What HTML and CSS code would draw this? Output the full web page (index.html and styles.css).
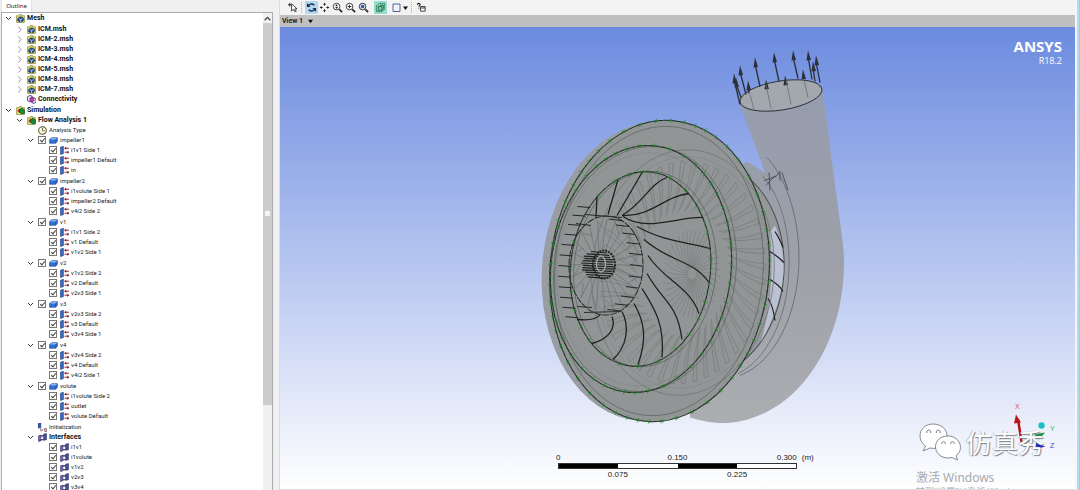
FILE: index.html
```html
<!DOCTYPE html>
<html lang="en">
<head>
<meta charset="utf-8">
<title>Flow Analysis 1</title>
<link rel="stylesheet" href="styles.css">
</head>
<body>
<svg class="defs" aria-hidden="true">
  <symbol id="i-mesh" viewBox="0 0 16 16"><path d="M1 3h4l1-2h4v2h5v12H1z" fill="#e4e06a" stroke="#6d6c22"/><path d="M3 8l4-3 5 1 2 3-2 4-5 1-4-2z" fill="#274f9c" stroke="#101c3c"/><path d="M5 8l3 2 4-2M8 10v4" stroke="#bcd4f4" stroke-width="1.5" fill="none"/></symbol>
  <symbol id="i-conn" viewBox="0 0 16 16"><path d="M1 3l4-2 4 1v7l-4 3-4-2z" fill="#fff" stroke="#26215e" stroke-width="1.5"/><path d="M9 6l4-1 3 2v6l-4 2-4-2z" fill="#fff" stroke="#26215e" stroke-width="1.5"/><path d="M5 5l6-1 2 6-4 3-4-2z" fill="#b43bb5" stroke="#6d1673"/></symbol>
  <symbol id="i-sim" viewBox="0 0 16 16"><path d="M1 3h4l1-2h4v2h5v12H1z" fill="#e4e06a" stroke="#6d6c22"/><path d="M2 9l5-5v9z" fill="#d22e22"/><path d="M6 6l5-2 4 3v6l-5 1-4-3z" fill="#128a3b" stroke="#0b3a1c"/></symbol>
  <symbol id="i-clock" viewBox="0 0 16 16"><circle cx="8" cy="8" r="6.8" fill="#fdfbe2" stroke="#57552e" stroke-width="1.8"/><path d="M8 3.500v5h4" fill="none" stroke="#57552e" stroke-width="1.500"/></symbol>
  <symbol id="i-domain" viewBox="0 0 16 16"><path d="M1 6l4-3h10v6l-3 4H1z" fill="#2f6fd0" stroke="#1a3c8c"/><path d="M2 6l3-2.500h9L12 6z" fill="#86b5f3"/><path d="M12 6v6" stroke="#1a3c8c"/></symbol>
  <symbol id="i-bound" viewBox="0 0 16 16"><path d="M1 2l5-1.500v13L1 15z" fill="#3270d0" stroke="#15295c"/><path d="M8 4h8M8 11h8" stroke="#8f1f2b" stroke-width="1.700"/><path d="M11 1v6l-3-3zM13 8v6l3-3z" fill="#8f1f2b"/></symbol>
  <symbol id="i-init" viewBox="0 0 16 16"><path d="M0 1l5-1v8l-5 1z" fill="#2b61b4" stroke="#15295c"/><path d="M5 9v5h2M7 12h3M12 10h3v5h-3z" fill="none" stroke="#6a3442" stroke-width="1.300"/></symbol>
  <symbol id="i-face" viewBox="0 0 16 16"><path d="M1 5l4-1v10l-4 1z" fill="#7568b8" stroke="#251f55"/><path d="M10 2l5-1v11l-5 1z" fill="#4052a0" stroke="#251f55"/><path d="M5 5h5M5 12h5" stroke="#321c46" stroke-width="2"/></symbol>
</svg>
<div class="app">
  <aside class="outline">
    <div class="tabs"><button class="tab" type="button">Outline</button></div>
    <div class="panel">
      <ul class="tree" id="tree"></ul>
      <div class="scroll"><button class="scroll-up" type="button" aria-label="Scroll up"><svg viewBox="0 0 8 8"><path d="M1.500 5.500L4 3l2.500 2.500" fill="none" stroke="#444" stroke-width="1.200"/></svg></button><div class="thumb"><i></i></div></div>
    </div>
  </aside>
  <main class="viewer">
    <div class="toolbar">
      <button type="button" class="pick" aria-label="Select"><svg viewBox="0 0 12 12"><path d="M1 3h4M3 1v4" stroke="#222"/><path d="M5 2v8l2-2 2 3 1-1-1.500-2.500H11z" fill="#fff" stroke="#222" stroke-width=".9"/></svg></button>
      <span class="grip"></span>
      <button type="button" class="on" aria-label="Rotate"><svg viewBox="0 0 12 12"><path d="M2 5a4 3.500 0 0 1 7-1.500M10 7a4 3.500 0 0 1-7 1.500" fill="none" stroke="#17304f" stroke-width="1.600"/><path d="M1 1v4.500h4zM11 11V6.500H7z" fill="#17304f"/></svg></button>
      <button type="button" aria-label="Pan"><svg viewBox="0 0 12 12"><path d="M6 1v3M6 8v3M1 6h3M8 6h3" stroke="#222"/><path d="M6 1L4.300 3h3.400zM6 11L4.300 9h3.400zM1 6l2-1.700v3.400zM11 6L9 4.300v3.400z" fill="#222"/></svg></button>
      <button type="button" aria-label="Zoom"><svg viewBox="0 0 12 12"><circle cx="5" cy="5" r="3.600" fill="#fff" stroke="#333"/><path d="M8 8l3 3" stroke="#222" stroke-width="1.800"/><path d="M5 2.500L3.500 4.500h3zM5 7.500L3.500 5.500h3z" fill="#222"/></svg></button>
      <button type="button" aria-label="Zoom box"><svg viewBox="0 0 12 12"><circle cx="5" cy="5" r="3.600" fill="#fff" stroke="#333"/><path d="M8 8l3 3" stroke="#222" stroke-width="1.800"/><path d="M3 5h4M5 3v4" stroke="#222"/></svg></button>
      <button type="button" aria-label="Fit view"><svg viewBox="0 0 12 12"><circle cx="5" cy="5" r="3.600" fill="#c6d4ee" stroke="#333"/><path d="M8 8l3 3" stroke="#222" stroke-width="1.800"/><path d="M3.500 3.500h3v3h-3z" fill="#344c86"/></svg></button>
      <button type="button" class="on green" aria-label="Highlighting"><svg viewBox="0 0 12 12"><path d="M1.500 4l3-2.500h6V8l-3 2.500h-6z" fill="#8ccfb2" stroke="#14704c" stroke-dasharray="1.500 .7"/><path d="M3.500 5h4v4h-4zM5 5l1-1.500h3v4L7.500 9" fill="none" stroke="#14704c"/></svg></button>
      <button type="button" class="wide" aria-label="Viewports"><svg viewBox="0 0 20 12"><path d="M3 2h7v7.500H3z" fill="#eef3fc" stroke="#53658e"/><path d="M13 4.500h5L15.500 8z" fill="#111"/></svg></button>
      <span class="grip"></span>
      <button type="button" aria-label="Help"><svg viewBox="0 0 12 12"><path d="M1.500 3c0-2 3-2 3 0L3 5M3 6.200v1" fill="none" stroke="#222" stroke-width="1.200"/><path d="M5 5h5v5H5zM5 6.500h5" fill="#fff" stroke="#333"/></svg></button>
    </div>
    <button type="button" class="viewbar">View 1 <svg viewBox="0 0 8 6"><path d="M1 1h6L4 5z" fill="#111"/></svg></button>
    <div class="canvas">
      <svg class="scene" id="scene" viewBox="280 27 795 463" preserveAspectRatio="xMidYMid slice" role="img" aria-label="Impeller and volute model">
        <defs><linearGradient id="vol" x1="0" y1="0" x2="0" y2="1"><stop offset="0" stop-color="#959cae"/><stop offset=".5" stop-color="#9da0a8"/><stop offset="1" stop-color="#acadb1"/></linearGradient></defs>
        <path fill="url(#vol)" d="M740 105L765 173L747 162L690 200V418C704 422 715 424 727 423.500C752 422 776 411 797 390C829 357 844 310 844 263C844 250 842 237 841 230L822 87Z"/>
        <ellipse cx="652" cy="272" rx="110" ry="150" transform="rotate(5 652 272)" fill="#999da3"/>
        <ellipse cx="781" cy="96" rx="41.500" ry="14.500" transform="rotate(-9 781 96)" fill="#a3a7ae" stroke="#282b30" stroke-width=".9"/>
        <g id="outletArrows"></g>
        <path d="M767 158C784 176 799 214 799 258C799 312 776 362 740 376" fill="none" stroke="#555c68" stroke-width=".7"/>
        <path d="M762 176C780 195 790 230 789 268C788 322 764 362 738 374" fill="none" stroke="#666a70" stroke-width=".8"/>
        <ellipse cx="703" cy="270" rx="81" ry="108" transform="rotate(4 703 270)" fill="#95989a" stroke="#4b4e50" stroke-width="1"/>
        <path d="M775 226C786 252 787 278 775 312C771 323 766 333 761 342C771 308 774 270 770 232Z" fill="#b9c1d3"/>
        <path d="M770 252Q778 257 784 263M770 280Q780 286 783 292M768 299Q773 306 775 321M775 232Q781 242 783 248" fill="none" stroke="#1c1d1d" stroke-width="1.200"/>
        <path d="M769 173l1 18M764 181l12-4 4-5v9M782 173l6 18M766 186l9-10" fill="none" stroke="#3c4149" stroke-width=".8"/>
        <ellipse cx="659.500" cy="271.500" rx="109.500" ry="151" transform="rotate(5.500 659.500 271.500)" fill="#929595"/>
        <g id="ghost"></g>
        <g id="rings"></g>
        <g id="hub"></g>
        <g fill="none" stroke="#202222" stroke-width="1.300" id="blades">
          <path d="M597 197L596 218M618 180L608 215M642 173L617 216M667 178C650 184 643 204 622 216"/>
          <path d="M689 194C663 197 653 217 622 216"/><path d="M703 218C677 217 647 233 623 217"/>
          <path d="M710 249C690 243 663 242 637 227"/><path d="M709 283C693 260 670 263 644 240"/>
          <path d="M699 314C690 287 663 280 648 256"/><path d="M682 340C677 303 663 303 647 274"/>
          <path d="M662 358C665 323 653 307 642 289"/><path d="M638 365C647 340 645 323 634 304"/>
          <path d="M613 360C627 347 630 327 622 312"/><path d="M592 344C607 340 617 330 612 317"/><path d="M577 320C587 321 597 320 600 315"/>
        </g>
        <path d="M1022 445L1018 420" stroke="#b31217" stroke-width="2.500"/><path d="M1016 415l-2 9 7-1z" fill="#c41318"/>
        <path d="M1023 446h15" stroke="#171b9c" stroke-width="2"/><path d="M1036 443l9 4-9 3z" fill="#1b20c0"/>
        <path d="M1023 444L1038 436" stroke="#148536" stroke-width="2"/><path d="M1034 435l11-2-6 7z" fill="#149137"/>
        <circle cx="1041.500" cy="426" r="3.200" fill="#1cc0c4"/>
        <g class="axis"><text x="1015" y="409" fill="#df4b54">X</text><text x="1050" y="431" fill="#35b35c">Y</text><text x="1050" y="448" fill="#4145e0">Z</text></g>
      </svg>
      <div class="brand"><strong>ANSYS</strong><span>R18.2</span></div>
      <div class="scale">
        <div class="ticks"><span>0</span><span>0.150</span><span class="last">0.300</span></div>
        <div class="bar"><i></i><i></i><i></i><i></i></div>
        <div class="ticks under"><span>0.075</span><span>0.225</span></div>
        <span class="unit">(m)</span>
      </div>
      <div class="wechat">
        <svg viewBox="0 0 42 38"><g stroke="#858b94" stroke-width="1" fill="#fff"><path d="M14 1C6 1 1 6.500 1 13c0 4 2 7.500 5.500 10L4 28l7-3c9 2 17-3 17-12C28 6 22 1 14 1z"/><path d="M29 13c-8 0-12.500 5-12.500 11S22 35 29 35l4-.5 5.500 2.500-1.500-4.500c3-2 4.500-5 4.500-8C41.500 18 36 13 29 13z"/></g><g fill="#fff" stroke="#777d86"><path d="M8 10a2 2 0 1 1 3.500 0M17.500 10a2 2 0 1 1 3.500 0M23 21a1.700 1.700 0 1 1 3 0M32 21a1.700 1.700 0 1 1 3 0"/></g></svg>
        <span lang="zh">仿真秀</span>
      </div>
      <div class="activate" lang="zh"><p>激活 Windows</p><small>转到“设置”以激活 Windows。</small></div>
    </div>
  </main>
  <div class="edge"></div>
</div>
<script src="app.js"></script>
</body>
</html>
```
FILE: styles.css
```css
* { box-sizing: border-box; }
body { margin: 0; background: #f0f0f0; color: #222; font-family: Roboto, "Noto Sans", sans-serif; font-size: 7px; overflow: hidden; }
button { margin: 0; padding: 0; border: 0; background: none; font: inherit; color: inherit; }
svg { display: block; }
ul { margin: 0; padding: 0; list-style: none; }
.defs { position: absolute; width: 0; height: 0; }
.app { display: flex; height: 100vh; }

.outline { flex: 0 0 280px; display: flex; flex-direction: column; padding: 0 6px 0 1px; border-right: 1px solid #dcdcdc; }
.tabs { display: flex; height: 12px; }
.tab { width: 31px; background: #fff; border: 1px solid #e2e2e2; border-width: 0 1px; font-family: "Noto Sans", sans-serif; font-size: 6px; line-height: 12px; }
.panel { flex: 1; min-height: 0; display: flex; background: #fff; border: 1px solid #a9abb0; border-bottom: 0; overflow: hidden; }
.tree { flex: 1; padding-left: 3px; }
.tree ul { padding-left: 11px; }
.tree .spaced { padding-top: 1px; }
.tree .gap { padding-bottom: 1px; }
.row { display: flex; align-items: center; gap: 3px; height: 10px; white-space: nowrap; font-size: 6px; line-height: 10px; }
.row.bold { font-size: 7px; font-weight: bold; color: #111; }
.row .twist { flex: none; width: 8px; height: 8px; }
.row svg { width: 9px; height: 9px; }
.row .icon { flex: none; margin-right: -1px; }
.row label { display: flex; align-items: center; gap: 3px; font-weight: normal; }
.row input { position: relative; flex: none; appearance: none; width: 8px; height: 8px; margin: 0; border: 1px solid #777; background: #fff; }
.row input:checked::after { content: ""; position: absolute; left: 2px; top: 0; width: 2px; height: 4px; border: solid #444; border-width: 0 1px 1px 0; transform: rotate(40deg); }
.scroll { flex: 0 0 9px; display: flex; flex-direction: column; background: #f0f0f0; }
.scroll-up { height: 10px; }
.scroll-up svg { width: 9px; height: 9px; }
.thumb { flex: 0 1 80%; display: flex; align-items: center; justify-content: center; background: #cdcdcd; }
.thumb i { width: 5px; height: 5px; background: #f4f4f4; }

.viewer { flex: 1; min-width: 0; display: flex; flex-direction: column; }
.toolbar { flex: none; display: flex; align-items: center; height: 15px; padding-left: 6px; background: #f3f3f3; }
.toolbar button { width: 13px; height: 13px; padding: 1px; }
.toolbar svg { width: 11px; height: 11px; }
.toolbar .pick { margin-right: 2px; }
.toolbar .on { background: #b4d8f2; }
.toolbar .green { margin: 0 2px 0 4px; background: #9adbd0; }
.toolbar .wide { width: 22px; }
.toolbar .wide svg { width: 20px; height: 12px; }
.grip { width: 4px; height: 11px; border-left: 1px dotted #aaa; }
.viewbar { flex: none; display: flex; align-items: center; gap: 4px; height: 12px; padding-left: 2px; background: #c0c0c0; font-size: 7px; font-weight: bold; line-height: 12px; }
.viewbar svg { width: 7px; height: 5px; }
.canvas { position: relative; flex: 1; min-height: 0; overflow: hidden; background: linear-gradient(#6c8bdf, #b4c4f0 50%, #fff); border-bottom: 1px solid #ddd; }
.scene { width: 100%; height: 100%; }
.axis { font: 7px "Liberation Sans", sans-serif; }
.brand { position: absolute; top: 10px; right: 13px; display: flex; flex-direction: column; align-items: flex-end; color: #fff; font-family: "Open Sans", sans-serif; }
.brand strong { font-size: 15px; line-height: 18px; }
.brand span { font-size: 9px; line-height: 11px; }
.scale { position: absolute; left: 35%; bottom: 10px; width: 30%; color: #222; font: 8px/9px "Liberation Sans", sans-serif; }
.ticks { display: flex; justify-content: space-between; height: 10px; }
.ticks span { display: flex; justify-content: center; width: 0; }
.ticks .last { justify-content: flex-end; }
.under { padding: 1px 25% 0; }
.bar { display: flex; height: 6px; border: 1px solid #333; background: #fff; }
.bar i { flex: 1; }
.bar i:nth-child(odd) { background: #000; }
.unit { position: absolute; left: calc(100% + 5px); top: 0; }
.wechat { position: absolute; right: 31px; bottom: 28px; display: flex; align-items: center; gap: 5px; color: #fff; }
.wechat svg { width: 42px; height: 38px; }
.wechat span { font: 26px/38px "Noto Sans CJK SC", sans-serif; text-shadow: 1px 1px 1px #7b818b, -1px 0 1px #b5bbc5; }
.activate { position: absolute; right: 52px; bottom: -8px; width: 107px; color: #a9abb0; font-family: "Noto Sans", "Noto Sans CJK SC", sans-serif; white-space: nowrap; }
.activate p { margin: 0; font-size: 12px; line-height: 16px; }
.activate small { display: block; font-size: 9px; line-height: 11px; }
.edge { flex: 0 0 5px; border: solid #a9c9dc; border-width: 0 1px 0 0; background: linear-gradient(90deg, #f1f7fc 50%, #b5dcec 50%); }
```
FILE: app.js
```js
const domain = (name, ...items) => ({ name, icon: 'domain', check: true, open: true, cls: 'gap',
  kids: items.map(n => ({ name: n, icon: 'bound', check: true })) });
const data = [
  { name: 'Mesh', icon: 'mesh', bold: true, open: true, cls: 'spaced gap', kids: [
    ...['ICM.msh', 'ICM-2.msh', 'ICM-3.msh', 'ICM-4.msh', 'ICM-5.msh', 'ICM-8.msh', 'ICM-7.msh']
      .map(name => ({ name, icon: 'mesh', bold: true, open: false })),
    { name: 'Connectivity', icon: 'conn', bold: true }] },
  { name: 'Simulation', icon: 'sim', bold: true, open: true, kids: [
    { name: 'Flow Analysis 1', icon: 'sim', bold: true, open: true, kids: [
      { name: 'Analysis Type', icon: 'clock' },
      domain('impeller1', 'i1v1 Side 1', 'impeller1 Default', 'in'),
      domain('impeller2', 'i1volute Side 1', 'impeller2 Default', 'v4i2 Side 2'),
      domain('v1', 'i1v1 Side 2', 'v1 Default', 'v1v2 Side 1'),
      domain('v2', 'v1v2 Side 2', 'v2 Default', 'v2v3 Side 1'),
      domain('v3', 'v2v3 Side 2', 'v3 Default', 'v3v4 Side 1'),
      domain('v4', 'v3v4 Side 2', 'v4 Default', 'v4i2 Side 1'),
      domain('volute', 'i1volute Side 2', 'outlet', 'volute Default'),
      { name: 'Initialization', icon: 'init' },
      { name: 'Interfaces', icon: 'face', bold: true, open: true,
        kids: ['i1v1', 'i1volute', 'v1v2', 'v2v3', 'v3v4'].map(name => ({ name, icon: 'face', check: true })) }] }] }];

function node(n) {
  const arrow = n.open === undefined ? '<span class="twist"></span>'
    : `<button type="button" class="twist" aria-label="Toggle ${n.name}"><svg viewBox="0 0 9 9"><path d="${n.open ? 'M1 3l2.500 2.500L6 3' : 'M2.500 1.500L5 4.500 2.500 7.500'}" fill="none" stroke="${n.open ? '#333' : '#999'}"/></svg></button>`;
  const icon = `<svg class="icon"><use href="#i-${n.icon}"/></svg>`;
  const body = n.check ? `<label><input type="checkbox" checked>${icon}<span>${n.name}</span></label>` : `${icon}<span>${n.name}</span>`;
  const kids = n.kids ? `<ul class="${n.cls || ''}">${n.kids.map(node).join('')}</ul>` : '';
  return `<li><div class="row${n.bold ? ' bold' : ''}">${arrow}${body}</div>${kids}</li>`;
}
document.getElementById('tree').innerHTML = data.map(node).join('');

const put = (id, html) => { document.getElementById(id).innerHTML = html; };
const at = (e, t, k = 1) => {
  const r = e.tilt * Math.PI / 180, x = e.rx * k * Math.cos(t), y = e.ry * k * Math.sin(t);
  return [e.cx + x * Math.cos(r) - y * Math.sin(r), e.cy + x * Math.sin(r) + y * Math.cos(r)];
};
const f = p => p.map(v => v.toFixed(1)).join(' ');
const ell = (cx, cy, rx, ry, tilt) => ({ cx, cy, rx, ry, tilt });
const ring = (e, attrs) => `<ellipse cx="${e.cx}" cy="${e.cy}" rx="${e.rx}" ry="${e.ry}" transform="rotate(${e.tilt} ${e.cx} ${e.cy})" fill="none" ${attrs}/>`;

/* flow arrows leaving the outlet */
const arrows = [[740, 105, 734, 76], [746, 95, 740, 68], [760, 87, 755, 60], [779, 82, 774, 55], [798, 79, 793, 53], [812, 80, 808, 53], [820, 83, 816, 58],
  [741, 98, 736, 80], [749, 94, 748, 83], [767, 85, 766, 82], [786, 80, 785, 78], [804, 79, 803, 72], [815, 82, 813, 64]];
put('outletArrows', arrows.map(([x1, y1, x2, y2]) =>
  `<path d="M${x1} ${y1}L${x2} ${y2 + 4}" stroke="#2c2f33" stroke-width="1.300"/><path d="M${x2} ${y2 - 2}l-1.500 10 4.500-.500z" fill="#2c2f33"/>`).join('')
  + '<path d="M766 85L771 109M786 80L791 105M804 80L808 98M750 95L754 110M818 84L820 88" stroke="#6a6e75" stroke-width=".8"/>');

/* rear blades seen through the shell */
const rear = ell(683, 273, 91, 123, 5);
let g = ring(rear, 'stroke="#737676" stroke-width=".8"') + ring(ell(683, 273, 86, 116, 5), 'stroke="#838686" stroke-width=".6"');
for (let i = 0; i < 44; i++) {
  const t = i / 44 * Math.PI * 2;
  g += `<path d="M${f(at(rear, t - .22, .5))}Q${f(at(rear, t - .04, .68))} ${f(at(rear, t, .91))}L${f(at(rear, t + .05, .9))}Q${f(at(rear, t, .7))} ${f(at(rear, t - .17, .52))}" fill="none" stroke="#7b7e7e" stroke-width=".8"/>`;
}
const core = ell(692, 274, 26, 40, 4);
for (let i = 0; i < 40; i++) {
  const t = i / 40 * Math.PI * 2;
  g += `<path d="M${f(at(core, t, .15))}Q${f(at(core, t, .7))} ${f(at(core, t + .2, 1.1))}" fill="none" stroke="#757878" stroke-width=".6"/>`;
}
put('ghost', g + '<ellipse cx="693" cy="279" rx="4" ry="7" fill="none" stroke="#7da37e" stroke-dasharray="1 2"/>');

/* casing rings with interface markers */
const outer = ell(659.5, 271.5, 109.5, 151, 5.5), mid = ell(641, 269.5, 90, 124, 7), inner = ell(640.5, 269.5, 70, 97.5, 6);
const soft = 'stroke="#626666" stroke-width=".8"';
let r = ring(ell(659, 271.5, 104, 145, 5.5), soft) + ring(ell(645, 269.5, 91, 123, 7), soft) + ring(ell(645, 269.5, 71, 98, 6), soft)
  + ring(ell(645, 270, 88, 117, 6), 'stroke="#7e8282" stroke-width=".5"');
[[outer, 50], [mid, 44], [inner, 26]].forEach(([e, n], k) => {
  r += ring(e, 'stroke="#1e2420" stroke-width="1"') + ring(e, 'stroke="#2f8135" stroke-width=".8" stroke-dasharray="2 4"');
  for (let i = 0; i < n; i++) {
    const t = (i + .3 * Math.sin(i * 7 + k)) / n * Math.PI * 2, [x, y] = at(e, t);
    r += `<path d="M${(x - 2).toFixed(1)} ${(y - 1).toFixed(1)}l4 2M${(x + .8).toFixed(1)} ${(y - 2.2).toFixed(1)}l-1.500 4.400" stroke="#20802a" stroke-width=".7"/>`;
  }
});
put('rings', r);

/* hub, shaft and inlet stubs */
const hub = ell(606, 266, 37, 49.5, 1);
let h = '';
for (let i = 0; i < 24; i++) {
  const t = i / 24 * Math.PI * 2, [x, y] = at(hub, t, .95);
  h += `<path d="M${602 + 13 * Math.cos(t)} ${265 + 14 * Math.sin(t)}L${x} ${y}" stroke="#6c6f6f" stroke-width=".7"/>`;
  if (i % 2) h += `<path d="M${f(at(hub, t, .9))}L${f(at(hub, t + .25, .7))}" stroke="#6e7171" stroke-width=".7"/>`;
}
h += ring(hub, 'stroke="#2a2c2c" stroke-width="1" stroke-dasharray="7 1"');
for (let i = 0; i < 11; i++) {
  const t = -1.15 + i * .23, [x, y] = at(hub, t);
  h += `<path d="M${f([x, y])}l-13-1.500" stroke="#262828" stroke-width="1"/>`;
}
for (let i = 0; i < 12; i++) {
  const t = Math.PI - .6 + i * .11, [x, y] = at(inner, t);
  h += `<path d="M${f([x + 1, y])}l-13-1" stroke="#262828" stroke-width="1"/>`;
}
h += '<path d="M585 215l37 3M584 313l37-1M576 224l15 2M577 307l15 1" stroke="#2c2e2e"/>';
for (let i = 0; i < 12; i++) {
  const y = 252 + i * 2.3, w = 16 * Math.sqrt(Math.max(.25, 1 - ((y - 265) / 15) ** 2));
  h += `<path d="M${599 - w - (i % 3)} ${y}l${w * 2} 1.500" stroke="#1f2020" stroke-width="1.200"/>`;
}
h += '<ellipse cx="604" cy="265" rx="11" ry="14" fill="none" stroke="#222" stroke-width="2" stroke-dasharray="2 1"/><ellipse cx="601" cy="264.500" rx="4.500" ry="8" fill="none" stroke="#a6a9a9" stroke-width="1.300"/>';
put('hub', h);
```
